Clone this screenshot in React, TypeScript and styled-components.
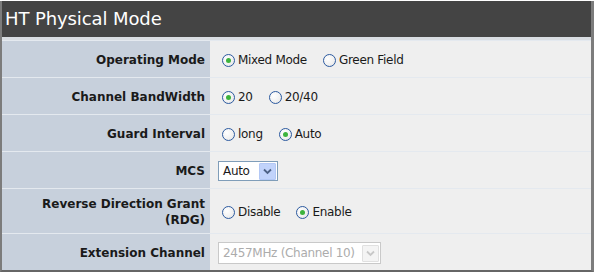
import React from 'react';
import styled, { createGlobalStyle } from 'styled-components';

const COLORS = {
	header: '#444444',
	border: '#7c7c7c',
	label: '#c7d0dc',
	labelLine: '#e4e9ef',
	value: '#efefef',
	text: '#1a1a1a',
	dot: '#3db33d'
};

const GlobalStyle = createGlobalStyle`
	html, body {
		margin: 0;
		padding: 0;
		background: #ffffff;
	}
	body {
		font-family: Tahoma, 'DejaVu Sans', sans-serif;
	}
`;

const Panel = styled.div`
	width: 589px;
	margin-top: 1px;
	border-left: 2px solid ${COLORS.border};
	border-right: 3px solid ${COLORS.border};
	border-bottom: 2px solid #666;
	background: ${COLORS.value};
`;

const Header = styled.div`
	height: 36px;
	background: ${COLORS.header};
	color: #ffffff;
	font-family: 'DejaVu Sans', sans-serif;
	font-size: 18px;
	line-height: 36px;
	padding-left: 3px;
	border-bottom: 3px solid #d9dde2;
	letter-spacing: -0.1px;
`;

const Row = styled.div<{ tall?: boolean }>`
	display: grid;
	grid-template-columns: 208px 1fr;
	height: ${({ tall }) => (tall ? '44px' : '36px')};
	border-top: 1px solid ${COLORS.labelLine};
	&:first-of-type {
		border-top: none;
		height: 37px;
	}
`;

const Label = styled.div`
	background: ${COLORS.label};
	display: flex;
	align-items: center;
	justify-content: flex-end;
	text-align: right;
	padding-right: 5px;
	padding-top: 2px;
	font-family: 'DejaVu Sans', sans-serif;
	font-weight: bold;
	font-size: 12px;
	line-height: 16px;
	color: ${COLORS.text};
`;

const Value = styled.div`
	display: flex;
	align-items: center;
	gap: 12px;
	padding-left: 8px;
	padding-top: 2px;
	background: ${COLORS.value};
	font-family: 'DejaVu Sans', sans-serif;
	font-size: 12px;
	color: ${COLORS.text};
`;

const Option = styled.label`
	display: inline-flex;
	align-items: center;
	letter-spacing: -0.3px;
`;

const Circle = styled.span<{ checked?: boolean }>`
	width: 11px;
	height: 11px;
	border-radius: 50%;
	border: 1px solid #2c5aa0;
	background: radial-gradient(circle at 35% 35%, #ffffff 0%, #f0f0f0 60%, #dcdcdc 100%);
	display: inline-flex;
	align-items: center;
	justify-content: center;
	margin-left: 4px;
	margin-right: 3px;
	&::after {
		content: '';
		display: ${({ checked }) => (checked ? 'block' : 'none')};
		width: 5px;
		height: 5px;
		border-radius: 50%;
		background: ${COLORS.dot};
	}
`;

const Select = styled.div<{ disabled?: boolean }>`
	display: inline-flex;
	align-items: center;
	justify-content: space-between;
	box-sizing: border-box;
	border: 1px solid ${({ disabled }) => (disabled ? '#c9c9c9' : '#7f9db9')};
	background: #ffffff;
	color: ${({ disabled }) => (disabled ? '#acacac' : COLORS.text)};
	padding-left: 4px;
	padding-right: 1px;
	font-size: 12px;
	letter-spacing: -0.3px;
`;

const Arrow = styled.span<{ disabled?: boolean }>`
	width: 17px;
	height: 17px;
	display: inline-flex;
	align-items: center;
	justify-content: center;
	background: ${({ disabled }) => (disabled ? '#f4f4f4' : '#c1d3fb')};
	border: 1px solid ${({ disabled }) => (disabled ? '#e0e0e0' : '#b3c8f5')};
	box-sizing: border-box;
	border-radius: 1px;
`;

const Radio: React.FC<{ checked?: boolean; label: string }> = ({ checked, label }) => (
	<Option>
		<Circle checked={checked} />
		{label}
	</Option>
);

const DropDown: React.FC<{ value: string; disabled?: boolean; width: number; height: number }> = ({
	value,
	disabled,
	width,
	height
}) => (
	<Select disabled={disabled} style={{ width, height }}>
		{value}
		<Arrow disabled={disabled}>
			<svg width="9" height="7" viewBox="0 0 9 7">
				<path
					d="M1 1.5 L4.5 5 L8 1.5"
					fill="none"
					stroke={disabled ? '#c8c8c8' : '#4d6185'}
					strokeWidth="1.8"
				/>
			</svg>
		</Arrow>
	</Select>
);

export default function App() {
	return (
		<>
			<GlobalStyle />
			<Panel>
				<Header>HT Physical Mode</Header>
				<Row>
					<Label>Operating Mode</Label>
					<Value>
						<Radio checked label="Mixed Mode" />
						<Radio label="Green Field" />
					</Value>
				</Row>
				<Row>
					<Label>Channel BandWidth</Label>
					<Value>
						<Radio checked label="20" />
						<Radio label="20/40" />
					</Value>
				</Row>
				<Row>
					<Label>Guard Interval</Label>
					<Value>
						<Radio label="long" />
						<Radio checked label="Auto" />
					</Value>
				</Row>
				<Row>
					<Label>MCS</Label>
					<Value>
						<DropDown value="Auto" width={60} height={20} />
					</Value>
				</Row>
				<Row tall>
					<Label>
						Reverse Direction Grant
						<br />
						(RDG)
					</Label>
					<Value>
						<Radio label="Disable" />
						<Radio checked label="Enable" />
					</Value>
				</Row>
				<Row>
					<Label>Extension Channel</Label>
					<Value>
						<DropDown value="2457MHz (Channel 10)" width={163} height={22} disabled />
					</Value>
				</Row>
			</Panel>
		</>
	);
}
